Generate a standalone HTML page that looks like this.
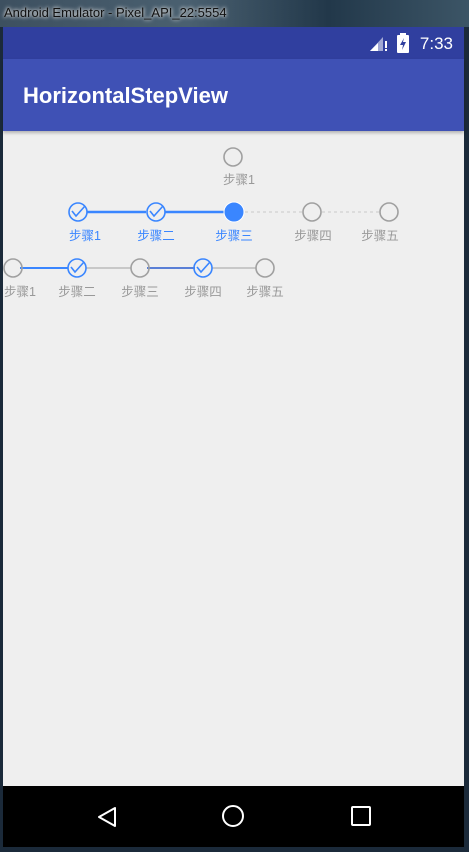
<!DOCTYPE html>
<html><head><meta charset="utf-8"><style>
html,body{margin:0;padding:0;width:469px;height:847px;overflow:hidden;background:#1b2a3a;font-family:"Liberation Sans","Noto Sans CJK SC",sans-serif}
.title{position:absolute;left:0;top:0;width:469px;height:27px;background:linear-gradient(90deg,#3d5060 0%,#4a6070 40%,#22384a 70%,#3c5566 100%);color:#000}
.title span{position:absolute;left:4px;top:5px;font-size:13px;color:#111;text-shadow:0 0 5px #ddd,0 0 3px #ddd}
.phone{position:absolute;left:3px;top:27px;width:461px;height:820px;background:#efefef}
.status{position:absolute;left:0;top:0;width:461px;height:32px;background:#303f9f}
.bar{position:absolute;left:0;top:32px;width:461px;height:72px;background:#3f51b5;box-shadow:0 2px 3px rgba(0,0,0,.25)}
.bar span{position:absolute;left:20px;top:24px;color:#fff;font-size:22px;font-weight:bold}
.time{position:absolute;right:11px;top:7px;color:#fff;font-size:17px}
.nav{position:absolute;left:0;top:759px;width:461px;height:61px;background:#000}
</style></head><body>
<div class="title"><span>Android Emulator - Pixel_API_22:5554</span></div>
<div class="phone">
 <div class="status">
  <svg style="position:absolute;left:366px;top:8px" width="22" height="18"><polygon points="1,16 14,2 14,16" fill="#fff" opacity=".55"/><polygon points="1,16 9,8 9,16" fill="#fff"/><rect x="16" y="6" width="2" height="7" fill="#fff"/><rect x="16" y="14" width="2" height="2" fill="#fff"/></svg>
  <svg style="position:absolute;left:394px;top:6px" width="12" height="20"><rect x="3" y="0" width="6" height="2" fill="#fff"/><rect x="0" y="2" width="12" height="18" rx="1" fill="#fff"/><polygon points="7,5 3,12 6,12 5,17 9,9 6,9" fill="#303f9f"/></svg>
  <div class="time">7:33</div>
 </div>
 <div class="bar"><span>HorizontalStepView</span></div>
 <svg style="position:absolute;left:-3px;top:-27px" width="469" height="847" font-family="Liberation Sans,Noto Sans CJK SC,sans-serif" font-size="12.5" text-anchor="middle">
  <circle cx="233" cy="157" r="9" fill="none" stroke="#a0a0a0" stroke-width="1.6"/>
  <text x="239" y="184" fill="#999">步骤1</text>
  <line x1="87" y1="212" x2="146" y2="212" stroke="#3a86ff" stroke-width="2.5"/>
  <line x1="165" y1="212" x2="224" y2="212" stroke="#3a86ff" stroke-width="2.5"/>
  <line x1="245" y1="212" x2="302" y2="212" stroke="#c8c8c8" stroke-width="1" stroke-dasharray="3,3"/>
  <line x1="322" y1="212" x2="380" y2="212" stroke="#c8c8c8" stroke-width="1" stroke-dasharray="3,3"/>
  <g fill="none" stroke="#3a86ff" stroke-width="1.6">
   <circle cx="78" cy="212" r="9"/><path d="M72 211l4 5 9-10"/>
   <circle cx="156" cy="212" r="9"/><path d="M150 211l4 5 9-10"/>
  </g>
  <circle cx="234" cy="212" r="10" fill="#3a86ff" stroke="#fff" stroke-width="1"/>
  <g fill="none" stroke="#a0a0a0" stroke-width="1.6"><circle cx="312" cy="212" r="9"/><circle cx="389" cy="212" r="9"/></g>
  <text x="85" y="240" fill="#3a86ff">步骤1</text>
  <text x="156" y="240" fill="#3a86ff">步骤二</text>
  <text x="234" y="240" fill="#3a86ff">步骤三</text>
  <text x="313" y="240" fill="#999">步骤四</text>
  <text x="380" y="240" fill="#999">步骤五</text>
  <line x1="20" y1="268" x2="68" y2="268" stroke="#3a86ff" stroke-width="2"/>
  <line x1="86" y1="268" x2="131" y2="268" stroke="#bbb" stroke-width="1.5"/>
  <line x1="147" y1="268" x2="195" y2="268" stroke="#5a7fd6" stroke-width="2"/>
  <line x1="212" y1="268" x2="256" y2="268" stroke="#bbb" stroke-width="1.5"/>
  <g fill="none" stroke="#a0a0a0" stroke-width="1.6"><circle cx="13" cy="268" r="9"/><circle cx="140" cy="268" r="9"/><circle cx="265" cy="268" r="9"/></g>
  <g fill="none" stroke="#3a86ff" stroke-width="1.6">
   <circle cx="77" cy="268" r="9"/><path d="M71 267l4 5 9-10"/>
   <circle cx="203" cy="268" r="9"/><path d="M197 267l4 5 9-10"/>
  </g>
  <g fill="#999"><text x="20" y="296">步骤1</text><text x="77" y="296">步骤二</text><text x="140" y="296">步骤三</text><text x="203" y="296">步骤四</text><text x="265" y="296">步骤五</text></g>
 </svg>
 <div class="nav">
  <svg width="461" height="61" fill="none" stroke="#fff" stroke-width="2">
   <polygon points="112,22 112,40 96,31" stroke-linejoin="round"/>
   <circle cx="230" cy="30" r="10"/>
   <rect x="349" y="21" width="18" height="18" rx="1"/>
  </svg>
 </div>
</div>
</body></html>
